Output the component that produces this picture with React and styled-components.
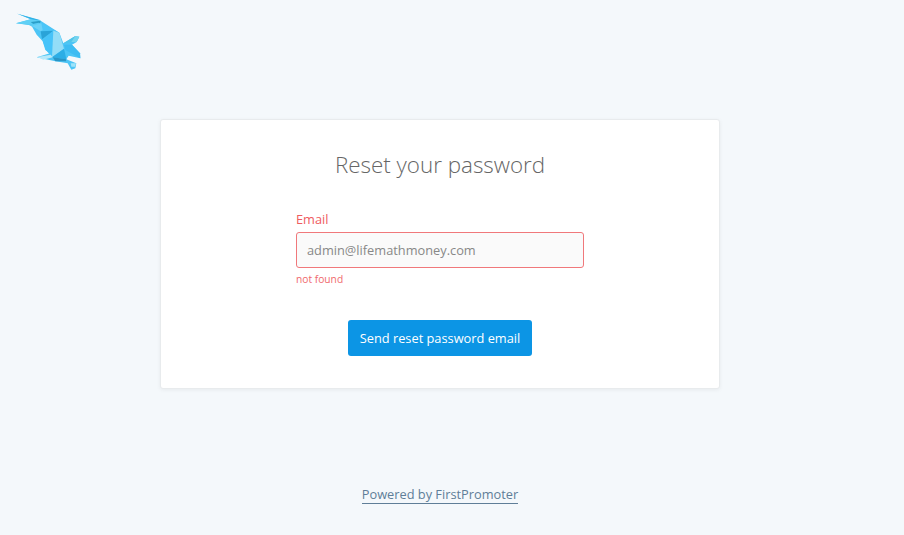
import React from "react";
import styled, { createGlobalStyle } from "styled-components";

const GlobalStyle = createGlobalStyle`
  html, body {
    margin: 0;
    padding: 0;
    background: #f4f8fb;
    font-family: "Open Sans", "Liberation Sans", sans-serif;
  }
`;

// traced by hand from the falcon logo, coordinates are 3x page pixels
const silhouette =
  "52,41 122,62 178,98 190,130 226,108 238,110 230,126 216,134 240,160 241,175 206,167 199,178 229,190 226,205 214,209 203,190 166,184 110,172 150,160 136,150 128,124 110,104 95,78 86,75 48,70 92,58";

const facets = [
  ["52,41 120,60 110,64 92,57", "#2fb2e6"],
  ["48,70 92,58 122,62 116,66 88,74", "#5fd0f5"],
  ["92,66 122,62 120,70 100,72", "#2b9fc9"],
  ["88,74 116,68 124,72 96,80", "#5bcdf5"],
  ["124,70 178,98 160,92 128,90", "#4cc6f8"],
  ["96,78 124,70 128,90 122,94", "#6cd2f8"],
  ["122,94 160,92 126,118", "#2aa3d8"],
  ["128,122 160,92 156,172 138,150", "#46c3f9"],
  ["160,92 178,98 192,146 156,172", "#93ddf7"],
  ["156,172 192,146 199,178", "#2caee6"],
  ["190,130 226,108 214,126", "#4fc4e8"],
  ["226,108 238,110 230,126 214,126", "#74d4ee"],
  ["192,134 216,134 240,160 241,175 196,150", "#3ebcf2"],
  ["112,171 152,164 158,172 130,179", "#b8e9fa"],
  ["158,172 199,178 198,184 166,184", "#2a96c6"],
  ["212,190 228,190 225,200 214,200", "#9fe3f8"],
];

const Logo = () => (
  <LogoMark viewBox="0 0 300 240" aria-label="logo">
    <polygon points={silhouette} fill="#4cc5f6" />
    {facets.map(([points, fill]) => (
      <polygon key={points} points={points} fill={fill} />
    ))}
  </LogoMark>
);

const App = () => (
  <Page>
    <GlobalStyle />
    <Header>
      <Logo />
    </Header>
    <Card>
      <Title>Reset your password</Title>
      <Form onSubmit={(e) => e.preventDefault()}>
        <Label htmlFor="email">Email</Label>
        <Input id="email" defaultValue="" placeholder="admin@lifemathmoney.com" />
        <ErrorText>not found</ErrorText>
        <Button type="submit">Send reset password email</Button>
      </Form>
    </Card>
    <Footer>
      <PoweredBy href="#">Powered by FirstPromoter</PoweredBy>
    </Footer>
  </Page>
);

export default App;

const Page = styled.div`
  box-sizing: border-box;
  height: 535px;
  padding-right: 24px;
  overflow: hidden;
  display: flex;
  flex-direction: column;
`;

const Header = styled.header`
  height: 119px;
  flex: none;
`;

const LogoMark = styled.svg`
  display: block;
  width: 100px;
  height: 80px;
`;

const Card = styled.main`
  box-sizing: border-box;
  width: 560px;
  height: 270px;
  margin: 0 auto;
  padding-top: 30px;
  background: #fff;
  border: 1px solid #e8ebed;
  border-radius: 3px;
  box-shadow: 0 1px 4px rgba(0, 0, 0, 0.06);
`;

const Title = styled.h1`
  margin: 0;
  text-align: center;
  font-size: 22.4px;
  line-height: 30px;
  font-weight: 300;
  color: #666;
`;

const Form = styled.form`
  width: 288px;
  margin: 30px auto 0;
  display: flex;
  flex-direction: column;
`;

const Label = styled.label`
  font-size: 12.8px;
  line-height: 18px;
  color: #ef5b5f;
  margin-bottom: 4px;
`;

const Input = styled.input`
  box-sizing: border-box;
  width: 100%;
  height: 36px;
  padding: 0 10px;
  background: #fafafa;
  border: 1px solid #f0787b;
  border-radius: 3px;
  outline: none;
  font: 12.8px "Open Sans", "Liberation Sans", sans-serif;
  color: #555;

  &::placeholder {
    color: #888;
    opacity: 1;
  }
`;

const ErrorText = styled.div`
  margin-top: 4px;
  font-size: 10.24px;
  line-height: 14px;
  color: #f0696d;
`;

const Button = styled.button`
  align-self: center;
  box-sizing: border-box;
  height: 36px;
  width: 184px;
  margin-top: 34px;
  padding: 0;
  border: 0;
  border-radius: 3px;
  background: #0c95e5;
  color: #fff;
  font: 12.8px "Open Sans", "Liberation Sans", sans-serif;
`;

const Footer = styled.footer`
  margin-top: 93px;
  text-align: center;
`;

const PoweredBy = styled.a`
  font-size: 12.8px;
  line-height: 18px;
  color: #5f7e98;
  text-decoration: none;
  border-bottom: 1px solid #5f7e98;
`;
